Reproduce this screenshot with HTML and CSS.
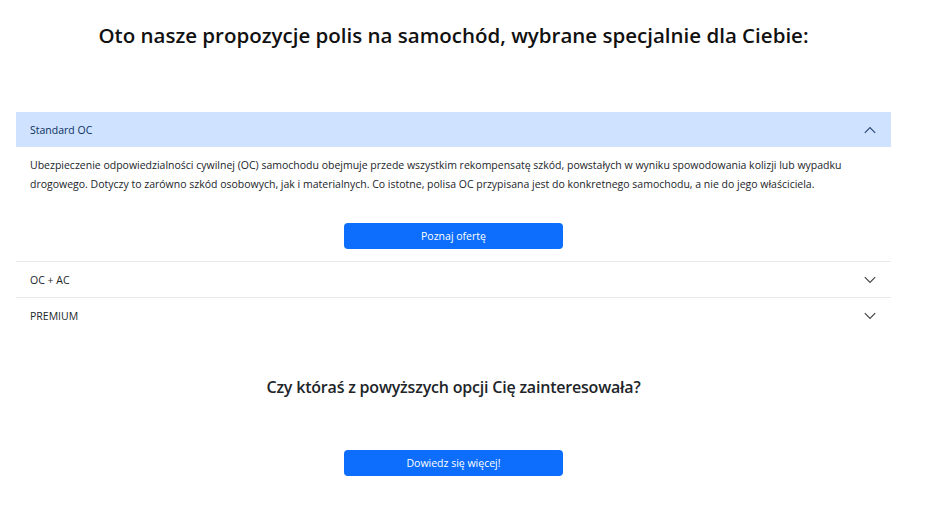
FILE: index.html
```html
<!DOCTYPE html>
<html lang="pl">
<head>
<meta charset="utf-8">
<title>Polisy</title>
<link rel="stylesheet" href="styles.css">
</head>
<body>
<main class="page">
  <h1 class="title">Oto nasze propozycje polis na samochód, wybrane specjalnie dla Ciebie:</h1>
  <div class="accordion">
    <div class="acc-item">
      <div class="acc-head open">
        <span>Standard OC</span>
        <svg class="chev" width="12" height="8" viewBox="0 0 12 8"><path d="M0.8 6.8 L6 1.6 L11.2 6.8" fill="none" stroke="#2d4a7a" stroke-width="1.2"/></svg>
      </div>
      <div class="acc-body">
        <p>Ubezpieczenie odpowiedzialności cywilnej (OC) samochodu obejmuje przede wszystkim rekompensatę szkód, powstałych w wyniku spowodowania kolizji lub wypadku drogowego. Dotyczy to zarówno szkód osobowych, jak i materialnych. Co istotne, polisa OC przypisana jest do konkretnego samochodu, a nie do jego właściciela.</p>
        <div class="btn-row"><button class="btn">Poznaj ofertę</button></div>
      </div>
    </div>
    <div class="acc-item">
      <div class="acc-head">
        <span>OC + AC</span>
        <svg class="chev" width="12" height="8" viewBox="0 0 12 8"><path d="M0.8 1.2 L6 6.4 L11.2 1.2" fill="none" stroke="#444" stroke-width="1.2"/></svg>
      </div>
    </div>
    <div class="acc-item last">
      <div class="acc-head">
        <span>PREMIUM</span>
        <svg class="chev" width="12" height="8" viewBox="0 0 12 8"><path d="M0.8 1.2 L6 6.4 L11.2 1.2" fill="none" stroke="#444" stroke-width="1.2"/></svg>
      </div>
    </div>
  </div>
  <h2 class="subtitle">Czy któraś z powyższych opcji Cię zainteresowała?</h2>
  <div class="btn-row"><button class="btn">Dowiedz się więcej!</button></div>
</main>
</body>
</html>
```
FILE: styles.css
```css
html, body {
  margin: 0;
  padding: 0;
  background: #fff;
}
body {
  font-family: "Open Sans", "Noto Sans", sans-serif;
  color: #212529;
}
.page {
  width: 875px;
  margin-left: 16px;
  padding-top: 20px;
}
.title {
  margin: 0;
  text-align: center;
  font-size: 20.5px;
  font-weight: 600;
  line-height: 30px;
  color: #111;
}
.accordion {
  margin-top: 62px;
}
.acc-item {
  border-bottom: 1px solid #e9e9e9;
}
.acc-item.last {
  border-bottom: none;
}
.acc-head {
  height: 35px;
  display: flex;
  align-items: center;
  justify-content: space-between;
  padding: 0 15px 0 14px;
  font-size: 10.5px;
  color: #212529;
}
.acc-head.open {
  background: #cfe2ff;
  color: #0a3160;
}
.chev {
  display: block;
}
.acc-body {
  padding: 9px 14px 12px;
}
.acc-body p {
  margin: 0;
  font-size: 10.5px;
  line-height: 19px;
  color: #212529;
}
.btn-row {
  display: flex;
  justify-content: center;
}
.acc-body .btn-row {
  margin-top: 29px;
}
.btn {
  width: 219px;
  height: 26px;
  border: none;
  border-radius: 4px;
  background: #0d6efd;
  color: #fff;
  font-family: "Open Sans", "Noto Sans", sans-serif;
  font-size: 10.5px;
  padding: 0;
}
.subtitle {
  margin: 42px 0 51px;
  text-align: center;
  font-size: 16px;
  font-weight: 600;
  letter-spacing: -0.2px;
  line-height: 24px;
  color: #212529;
}
```
